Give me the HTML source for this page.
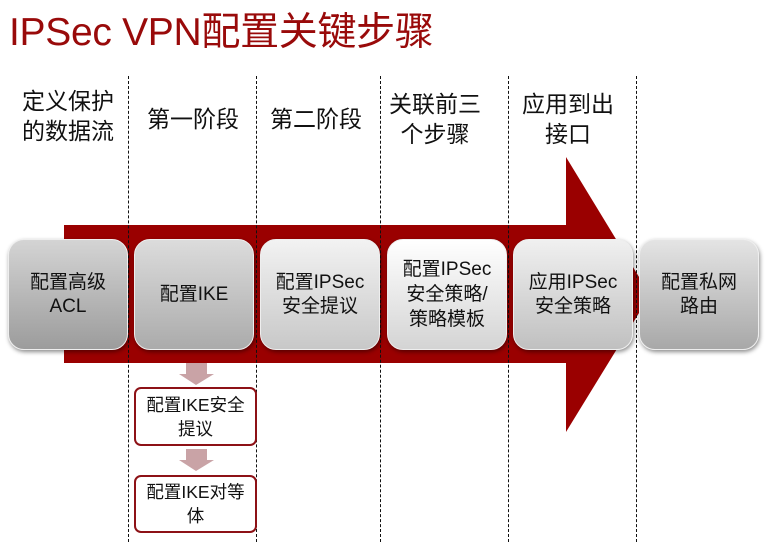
<!DOCTYPE html>
<html><head><meta charset="utf-8"><style>
*{margin:0;padding:0;box-sizing:border-box}
body{width:779px;height:542px;background:#fff;position:relative;overflow:hidden;font-family:"Liberation Sans","Noto Sans CJK SC",sans-serif;color:#111}
.t{position:absolute;left:9px;top:1px;font-size:39px;color:#990a0a;letter-spacing:-0.3px;white-space:nowrap}
.h{position:absolute;font-size:23px;text-align:center;line-height:30px;white-space:nowrap}
.d{position:absolute;top:76px;height:466px;border-left:1px dashed #111}
.b{position:absolute;top:239px;height:111px;width:120px;border-radius:16px;display:flex;align-items:center;justify-content:center;text-align:center;font-size:19px;line-height:24px;box-shadow:1px 2px 4px rgba(0,0,0,.45);border:1px solid #eee;white-space:nowrap}
.s{position:absolute;left:134px;width:123px;border:2px solid #8d1116;border-radius:7px;background:#fff;text-align:center;font-size:17.5px;line-height:24px;display:flex;align-items:center;justify-content:center;white-space:nowrap}
</style></head><body>
<div class="t">IPSec VPN配置关键步骤</div>
<svg style="position:absolute;left:0;top:0" width="779" height="542">
<polygon points="64,225 566,225 566,157 650,295 566,432 566,363 64,363" fill="#9a0000"/>
<polygon points="186,363 207,363 207,374 214,374 196,385 179,374 186,374" fill="#c9a3a6"/>
<polygon points="186,449 207,449 207,460 214,460 196,471 179,460 186,460" fill="#c9a3a6"/>
</svg>
<div class="d" style="left:128px"></div>
<div class="d" style="left:256px"></div>
<div class="d" style="left:380px"></div>
<div class="d" style="left:508px"></div>
<div class="d" style="left:636px"></div>
<div class="h" style="left:22px;top:86px">定义保护<br>的数据流</div>
<div class="h" style="left:147px;top:104px">第一阶段</div>
<div class="h" style="left:270px;top:104px">第二阶段</div>
<div class="h" style="left:389px;top:89px">关联前三<br>个步骤</div>
<div class="h" style="left:522px;top:89px">应用到出<br>接口</div>
<div class="b" style="left:8px;background:linear-gradient(#d4d4d4,#9c9c9c)">配置高级<br>ACL</div>
<div class="b" style="left:134px;background:linear-gradient(#dcdcdc,#ababab)">配置IKE</div>
<div class="b" style="left:260px;background:linear-gradient(#f2f2f2,#c8c8c8)">配置IPSec<br>安全提议</div>
<div class="b" style="left:387px;line-height:25px;background:linear-gradient(#ffffff,#d4d4d4)">配置IPSec<br>安全策略/<br>策略模板</div>
<div class="b" style="left:513px;background:linear-gradient(#f0f0f0,#c0c0c0)">应用IPSec<br>安全策略</div>
<div class="b" style="left:639px;background:linear-gradient(#e4e4e4,#a8a8a8)">配置私网<br>路由</div>
<div class="s" style="top:387px;height:59px">配置IKE安全<br>提议</div>
<div class="s" style="top:475px;height:58px">配置IKE对等<br>体</div>
</body></html>
